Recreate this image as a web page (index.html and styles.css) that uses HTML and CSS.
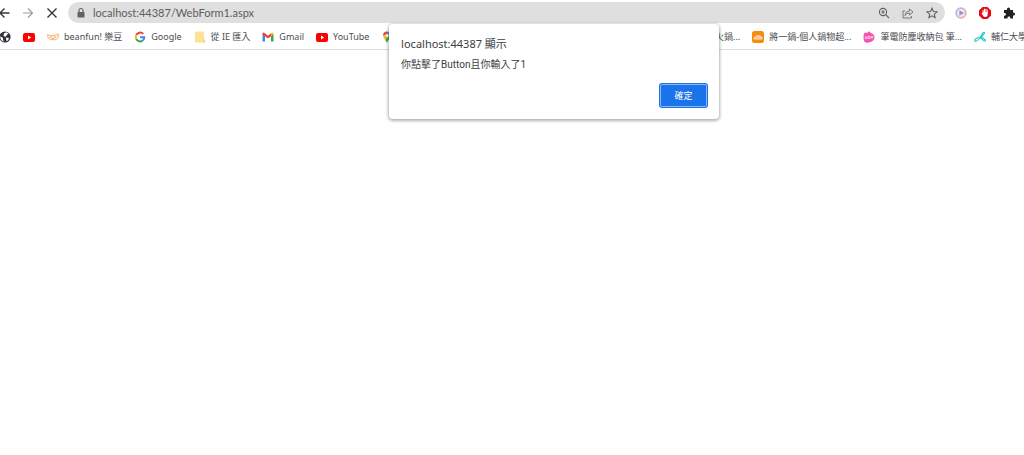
FILE: index.html
```html
<!DOCTYPE html>
<html lang="zh-Hant">
<head>
<meta charset="utf-8">
<title>localhost:44387/WebForm1.aspx</title>
<link rel="stylesheet" href="styles.css">
</head>
<body>
<svg class="defs" aria-hidden="true">
  <symbol id="youtube" viewBox="0 0 12 12"><rect y="2" width="12" height="9" rx="2" fill="#f00"/><path d="M5 4.500v4l3.200-2z" fill="#fff"/></symbol>
</svg>
<header class="browser">
  <div class="toolbar">
    <button class="tool" aria-label="Back"><svg class="icon" viewBox="0 0 12 12"><path d="M11.500 6H2M6.500 1.500 2 6l4.500 4.500" fill="none" stroke="#333639" stroke-width="1.400"/></svg></button>
    <button class="tool" aria-label="Forward"><svg class="icon" viewBox="0 0 12 12"><path d="M1 6h9.500M6 1.500 10.500 6 6 10.500" fill="none" stroke="#9b9ea1" stroke-width="1.200"/></svg></button>
    <button class="tool" aria-label="Stop"><svg class="icon" viewBox="0 0 12 12"><path d="m1.500 1.500 9 9M10.500 1.500l-9 9" fill="none" stroke="#333639" stroke-width="1.400"/></svg></button>
    <div class="omnibox">
      <svg class="lock" viewBox="0 0 10 12"><rect x="1.500" y="5" width="7" height="5.500" rx=".8" fill="#5f6368"/><path d="M3 5V3.500a2 2 0 0 1 4 0V5" fill="none" stroke="#5f6368" stroke-width="1.200"/></svg>
      <input class="url" type="text" aria-label="Address" value="localhost:44387/WebForm1.aspx">
      <button class="tool" aria-label="Zoom"><svg class="icon" viewBox="0 0 12 12"><circle cx="5" cy="5" r="3.600" fill="none" stroke="#5f6368" stroke-width="1.100"/><path d="m7.700 7.700 3.300 3.300M3.200 5h3.600M5 3.200v3.600" stroke="#5f6368" stroke-width="1.100"/></svg></button>
      <button class="tool" aria-label="Share"><svg class="icon" viewBox="0 0 12 12"><path d="M3 4H1v7h8.500V9M3 8.500c.3-3 2-4.500 4.500-4.500V2L11 5 7.500 8V6C5.500 6 4 6.800 3 8.500z" fill="none" stroke="#6b6f73" stroke-width=".9"/></svg></button>
      <button class="tool" aria-label="Bookmark"><svg class="icon" viewBox="0 0 12 12"><path d="m6 1.200 1.400 3.300 3.600.3-2.700 2.400.8 3.500L6 8.800l-3.100 1.900.8-3.500L1 4.800l3.600-.3z" fill="none" stroke="#5f6368" stroke-width="1.100"/></svg></button>
    </div>
    <div class="extensions">
      <button class="tool" aria-label="Media extension"><svg class="icon" viewBox="0 0 12 12"><defs><linearGradient id="disc" x2="1" y2="1"><stop stop-color="#aab4f2"/><stop offset=".5" stop-color="#d6aed0"/><stop offset="1" stop-color="#f5b46d"/></linearGradient></defs><circle cx="6" cy="6" r="5.700" fill="url(#disc)"/><circle cx="6" cy="6" r="3.900" fill="#eeeaf7"/><path d="M4.300 3.300v5.400L9 6z" fill="#a090bd"/></svg></button>
      <button class="tool" aria-label="Ad blocker"><svg class="icon" viewBox="0 0 12 12"><path d="M3.600 0h4.800L12 3.600v4.800L8.400 12H3.600L0 8.400V3.600z" fill="#e50914"/><path d="M4.100 6V3.300M5.500 5.500V2.200M6.900 5.500V2.200M8.200 6V3" stroke="#fff" stroke-width="1" stroke-linecap="round"/><path d="M3.600 5h5v2.600C8.600 11 4.800 10.500 4 8.500L2.600 6.700z" fill="#fff"/></svg></button>
      <button class="tool" aria-label="Extensions"><svg class="icon" viewBox="0 0 12 12"><path d="M1 3h3V2a1.500 1.500 0 0 1 3 0v1h3v2.600h.5a1.500 1.500 0 0 1 0 3H10V11.500H7.300V11a1.400 1.400 0 0 0-2.800 0v.5H1V8.700h.6a1.400 1.400 0 0 0 0-2.800H1z" fill="#202124"/></svg></button>
    </div>
  </div>
  <nav class="bookmarks" aria-label="Bookmarks">
    <div class="group">
      <a class="bookmark" href="#" aria-label="Web"><svg class="icon" viewBox="0 0 12 12"><circle cx="6" cy="6" r="5.600" fill="#303338"/><path d="M1.300 5.200 4 7v2l1 1.600C2.500 10 1 8 1.300 5.200zM5 2.200l2.500-.9L9.700 3 8 3.500 6.700 5.700 4.500 5zM7 6.500l3 .5-1 2.500-1.600.5z" fill="#fff"/></svg></a>
      <a class="bookmark" href="#" aria-label="YouTube"><svg class="icon"><use href="#youtube"/></svg></a>
      <a class="bookmark" href="#"><svg class="icon" viewBox="0 0 12 12"><path d="M.5 3.500Q3 5 6 4.500T11.500 3C11.500 8 9 9.500 6 8.500 2.500 9.500.5 7 .5 3.500z" fill="#fff4e8" stroke="#f4ac6b" stroke-width=".9"/><path d="M3 6.500q1-1.500 2 0M7 6.500q1-1.500 2 0M5 7.500h2" fill="none" stroke="#f09a4e" stroke-width=".9"/></svg>beanfun! 樂豆</a>
      <a class="bookmark" href="#"><svg class="icon" viewBox="0 0 12 12"><g fill="none" stroke-width="2"><path d="M9.300 2.900A4.400 4.400 0 0 0 2.200 4.200" stroke="#ea4335"/><path d="M2.200 4.200a4.400 4.400 0 0 0 0 3.800" stroke="#fbbc05"/><path d="M2.200 8A4.400 4.400 0 0 0 9 9.300" stroke="#34a853"/><path d="M9 9.300q1.300-1.100 1.300-3.100H6" stroke="#4285f4"/></g></svg>Google</a>
      <a class="bookmark" href="#"><svg class="icon" viewBox="0 0 12 12"><path d="M1 1.500Q1 .5 2 .5h7q1 0 1 1V8h1v2.500q0 1-1 1H2q-1 0-1-1z" fill="#fde293"/><path d="M9 9.500h2v2H9z" fill="#f5cf68"/></svg>從 IE 匯入</a>
      <a class="bookmark" href="#"><svg class="icon" viewBox="0 0 12 12"><path d="M.5 3v7.500H3V5z" fill="#4285f4"/><path d="M9 5v5.500h2.500V3z" fill="#34a853"/><path d="M.5 3.500V2.300q.8-1.200 2-.3L6 4.700 9 2.300v3L6 7.600 3 5.300z" fill="#ea4335"/><path d="m9 2.300.8-.5q1.700-.5 1.700 1.200L9 5.300z" fill="#fbbc04"/></svg>Gmail</a>
      <a class="bookmark" href="#"><svg class="icon"><use href="#youtube"/></svg>YouTube</a>
      <a class="bookmark" href="#" aria-label="Maps"><svg class="icon" viewBox="0 0 12 12"><path d="M2 4.500A4 4 0 0 1 6 .5v4z" fill="#ea4335"/><path d="M6 .5a4 4 0 0 1 4 4H6z" fill="#4285f4"/><path d="M2 4.500h4V8L4.200 9Q2 6.500 2 4.500z" fill="#fbbc04"/><path d="M10 4.500Q10 6.500 7.500 9L6 11.800 4.200 9 8 4.500z" fill="#34a853"/><circle cx="6" cy="4.300" r="1.400" fill="#fff"/></svg></a>
    </div>
    <div class="group trailing">
      <a class="bookmark" href="#">火鍋...</a>
      <a class="bookmark" href="#"><svg class="icon" viewBox="0 0 12 12"><rect width="12" height="12" rx="2.500" fill="#f78b12"/><path d="M2 8.500Q1 6 3.500 5.500q1-2.500 3-1 2-1 2.500 1Q11.500 6 10 8.500z" fill="#ffe2bb"/><path d="M3 7h6M5 5.500h1" stroke="#f6a552" stroke-width=".7"/></svg>將一鍋-個人鍋物超...</a>
      <a class="bookmark" href="#"><svg class="icon" viewBox="0 0 12 12"><path d="M6 .3 8 2q3.500 1 3.500 4.500T6 11.500.5 6.500 4 2z" fill="#f455b0"/><path d="M2.300 5.500v2h1.500v-2M5 5.500h2v2H5zM8.300 7.500v-2h1.500v2" fill="none" stroke="#ffe3f4" stroke-width=".8"/></svg>筆電防塵收納包 筆...</a>
      <a class="bookmark" href="#"><svg class="icon" viewBox="0 0 12 12"><path d="M11 1.500C8 .5 8 4 6.500 6S3 10.800 1.300 10.300 2 6.500 5 6.500s4 3.800 6 3.500-1.500-3-4.500-4M11 1.500 7.500 6" fill="none" stroke="#2ac8cc" stroke-width="1.200"/></svg>輔仁大學</a>
    </div>
  </nav>
</header>
<main class="page">
  <dialog class="alert" open aria-labelledby="alert-title">
    <h1 class="alert-title" id="alert-title">localhost:44387 顯示</h1>
    <p class="alert-text">你點擊了Button且你輸入了1</p>
    <form class="alert-actions" method="dialog"><button class="confirm">確定</button></form>
  </dialog>
</main>
</body>
</html>
```
FILE: styles.css
```css
* {
  box-sizing: border-box;
}

body {
  margin: 0;
  background: #fff;
  color: #3c4043;
  font: 9px/16px "Noto Sans", "Noto Sans CJK TC", sans-serif;
  overflow: hidden;
}

.defs {
  display: none;
}

.icon {
  display: block;
  flex: none;
  width: 12px;
  height: 12px;
}

.toolbar {
  display: flex;
  align-items: center;
  gap: 12px;
  height: 25px;
  padding-right: 9px;
  margin-left: -2px;
}

.tool {
  flex: none;
  padding: 0;
  border: 0;
  background: none;
}

.omnibox {
  display: flex;
  flex: 1;
  align-items: center;
  gap: 12px;
  min-width: 0;
  height: 21px;
  margin-left: -2px;
  padding: 0 7px 0 8px;
  border-radius: 11px;
  background: #dfdfdf;
}

.lock {
  flex: none;
  width: 10px;
  height: 12px;
}

.url {
  flex: 1;
  min-width: 0;
  margin-left: -5px;
  padding: 0;
  border: 0;
  outline: 0;
  background: none;
  color: #5a5d61;
  font: 11px/20px Lato, sans-serif;
}

.extensions {
  display: flex;
  gap: 12px;
  margin-left: -2px;
}

.bookmarks {
  display: flex;
  align-items: center;
  height: 25px;
  margin: 0 -3px 0 -1px;
  border-bottom: 1px solid #dcdddf;
}

.group {
  display: flex;
  flex: none;
  gap: 12px;
}

.trailing {
  margin-left: auto;
}

.bookmark {
  display: flex;
  align-items: center;
  gap: 5px;
  color: #4a4d51;
  text-decoration: none;
  white-space: nowrap;
}

.alert {
  position: absolute;
  top: 24px;
  left: 38%;
  width: 330px;
  margin: 0;
  padding: 12px;
  border: 0;
  border-radius: 4px;
  background: #fff;
  color: #3c4043;
  box-shadow: 0 1px 3px 1px rgba(60, 64, 67, 0.4);
}

.alert-title {
  margin: 0;
  font-size: 11px;
  font-weight: 400;
  line-height: 16px;
}

.alert-text {
  margin: 4px 0 0;
  font: 10px/18px Roboto, "Noto Sans CJK TC", sans-serif;
}

.alert-actions {
  display: flex;
  justify-content: flex-end;
  margin-top: 10px;
}

.confirm {
  width: 47px;
  height: 23px;
  padding: 0;
  border: 0;
  border-radius: 2px;
  background: #1a73e8;
  box-shadow: inset 0 0 0 1px #8bb8f4, 0 0 0 1px #1a73e8;
  color: #fff;
  font: 9px/20px "Noto Sans CJK TC", sans-serif;
}
```
